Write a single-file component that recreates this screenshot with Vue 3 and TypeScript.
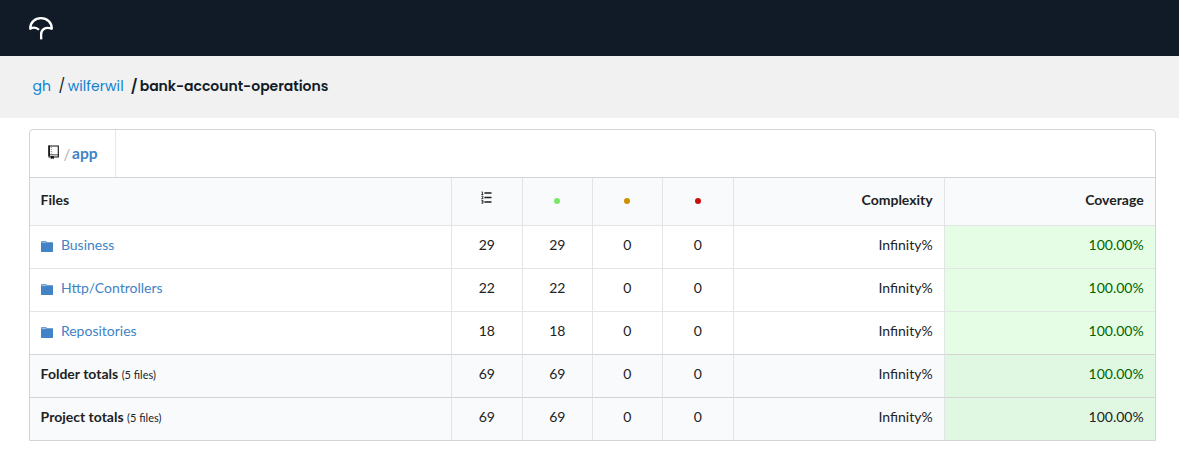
<script setup lang="ts">
interface Row {
  name: string
  lines: number
  hits: number
  partials: number
  misses: number
  kind: 'folder' | 'total' | 'project'
}

const rows: Row[] = [
  { name: 'Business', lines: 29, hits: 29, partials: 0, misses: 0, kind: 'folder' },
  { name: 'Http/Controllers', lines: 22, hits: 22, partials: 0, misses: 0, kind: 'folder' },
  { name: 'Repositories', lines: 18, hits: 18, partials: 0, misses: 0, kind: 'folder' },
  { name: 'Folder totals', lines: 69, hits: 69, partials: 0, misses: 0, kind: 'total' },
  { name: 'Project totals', lines: 69, hits: 69, partials: 0, misses: 0, kind: 'project' },
]
</script>

<template>
  <div class="page">
    <header class="topbar">
      <svg class="logo" width="26" height="26" viewBox="0 0 26 26" fill="none" stroke="#fff" stroke-width="2.3" stroke-linejoin="round">
        <path d="M11 14.8C8.6 12.4 5 12.2 2.2 13.8C2 7.4 7 3.1 13 3.1C19 3.1 24 7.4 23.8 13.8C17.5 11.2 13.1 14.6 13.1 19.6Q13.1 22 13.3 24.4" />
      </svg>
    </header>
    <nav class="crumbs">
      <a class="gh">gh</a><span class="slash">/</span><a class="owner">wilferwil</a><span class="slash bold">/</span><b class="repo">bank-account-operations</b>
    </nav>
    <main class="box">
      <div class="path">
        <div class="path-item">
          <svg class="book" width="11" height="15" viewBox="0 0 11 15">
            <path d="M1 1H10.3V12H1Z" fill="#fff" stroke="#111" stroke-width="1.1" />
            <path d="M.4 .5H1.9V11H.4ZM.4 9.4H10.8V10.2H.4Z" fill="#111" />
            <path d="M2.8 2.5h1M2.8 4.5h1M2.8 6.5h1M2.8 8.3h1" stroke="#777" stroke-width=".9" />
            <path d="M2.8 11H5.8V14.3L4.3 13.2L2.8 14.3Z" fill="#111" />
          </svg>
          <span class="sep">/</span><a class="app">app</a>
        </div>
      </div>
      <div class="row head">
        <div class="cell name">Files</div>
        <div class="cell num">
          <svg class="list" width="11" height="13" viewBox="0 0 11 13">
            <path d="M3.4 2H10.5M3.4 6.5H10.5M3.4 11H10.5" stroke="#1b1c1d" stroke-width="1.7" />
            <path d="M.6 .9H1.4V3.5M.4 3.5H2.4M.4 5.2H2V6.3L.6 7.6H2.4M.4 9.4H2V12.2H.4M.8 10.8H2" fill="none" stroke="#222" stroke-width=".9" />
          </svg>
        </div>
        <div class="cell num"><i class="dot green"></i></div>
        <div class="cell num"><i class="dot amber"></i></div>
        <div class="cell num"><i class="dot red"></i></div>
        <div class="cell right">Complexity</div>
        <div class="cell right">Coverage</div>
      </div>
      <div v-for="row in rows" :key="row.name" class="row" :class="row.kind">
        <div class="cell name">
          <template v-if="row.kind === 'folder'">
            <svg class="folder-icon" width="12" height="11" viewBox="0 0 12 11">
              <path d="M0 .8Q0 .2 .6 .2H5.2L6 1.2H11.4Q12 1.2 12 1.8V10.3Q12 11 11.4 11H.6Q0 11 0 10.3Z" fill="#4183c4" />
              <path d="M.6 1.4H5.4V2.1H.6Z" fill="#d5e4f3" />
            </svg>
            <a>{{ row.name }}</a>
          </template>
          <template v-else><b>{{ row.name }}</b><small>(5 files)</small></template>
        </div>
        <div class="cell num">{{ row.lines }}</div>
        <div class="cell num">{{ row.hits }}</div>
        <div class="cell num">{{ row.partials }}</div>
        <div class="cell num">{{ row.misses }}</div>
        <div class="cell right">Infinity%</div>
        <div class="cell right coverage">100.00%</div>
      </div>
    </main>
  </div>
</template>

<style>
body { background: #fff; }
</style>

<style scoped>
.page { height: 452px; overflow: hidden; font: 14px/20px Lato, sans-serif; color: #212223; }
.page * { box-sizing: border-box; }
.topbar { height: 56px; padding: 15px 0 0 28px; background: #111b27; }
.logo { display: block; }
.crumbs {
  height: 62px; padding: 0 0 2px 32.5px; background: #f1f1f1;
  display: flex; align-items: center; white-space: nowrap;
  font: 14px/22px Poppins, Inter, sans-serif; color: #121b27;
}
.crumbs a { color: #0f81d0; }
.gh { width: 26px; }
.owner { width: 63px; letter-spacing: .08px; }
.slash { width: 9.2px; font-size: 14px; }
.slash.bold { width: 9px; font-weight: 600; }
.repo { font-weight: 600; letter-spacing: -.03px; }
.box { width: 1127px; margin: 11px 0 0 29px; border: 1px solid #d4d4d5; border-radius: 4px 4px 0 0; overflow: hidden; }
.path { height: 48px; border-bottom: 1px solid #d4d4d5; }
.path-item { display: flex; width: 86px; height: 47px; padding-left: 18px; border-right: 1px solid #e6e7e8; align-items: center; }
.book { margin: 0 3px 3px 0; flex: none; }
.sep { width: 10px; color: #b0b0b0; font-size: 15px; line-height: 20px; text-align: center; }
.app { color: #4183c4; font-weight: 700; font-size: 15.6px; padding-bottom: 2px; }
.row { display: grid; grid-template-columns: 422px 71px 70px 70px 71px 211px 210px; height: 43px; }
.cell { display: flex; align-items: center; padding: 0 11.3px 5px 10.6px; border-right: 1px solid #e3e4e5; border-bottom: 1px solid #e3e4e5; white-space: nowrap; }
.cell:last-child { border-right: 0; }
.head { height: 48px; background: #f9fafb; font-weight: 700; }
.head .cell { padding-bottom: 4px; }
.num { justify-content: center; padding-left: 0; padding-right: .3px; }
.right { justify-content: flex-end; }
.name a { color: #4183c4; }
.folder-icon { margin: 4px 8.3px 0 0; flex: none; }
.total, .project { background: #f9fafb; }
.row:nth-last-child(-n+3) .cell { border-bottom-color: #d4d4d5; }
.row:last-child { height: 42px; }
.row:last-child .cell { border-bottom: 0; padding-bottom: 5px; }
small { font-size: 11px; margin-left: 3.5px; padding-top: 2px; }
.coverage { background: #e5fde4; color: #006400; }
.total .coverage, .project .coverage { background: #e0f8e1; }
.project .coverage { color: #212223; }
.list { margin-bottom: 4px; }
.dot { width: 6px; height: 6px; border-radius: 50%; margin-top: 3px; }
.green { background: #79e668; }
.amber { background: #cf9000; }
.red { background: #cb0d0d; }
</style>
